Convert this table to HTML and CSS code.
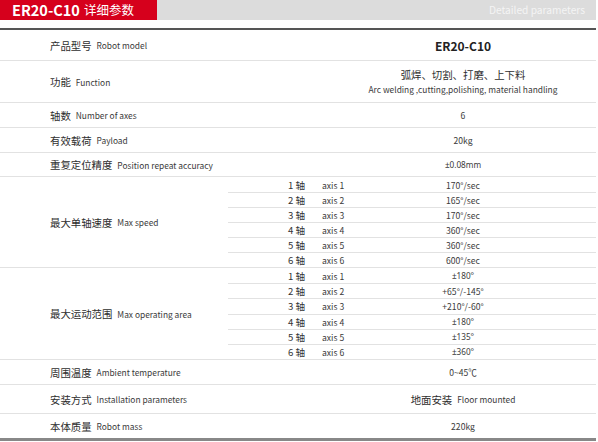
FILE: index.html
```html
<!DOCTYPE html>
<html lang="zh">
<head>
<meta charset="utf-8">
<title>ER20-C10 详细参数</title>
<link rel="stylesheet" href="styles.css">
</head>
<body>
<div class="page">
  <div class="head">
    <div class="head-title"><span class="head-en">ER20-C10</span><span class="head-cn">详细参数</span></div>
    <div class="head-sub">Detailed parameters</div>
  </div>
  <div class="spec">
    <div class="row h30">
      <div class="label"><span class="cn">产品型号</span><span class="en">Robot model</span></div>
      <div class="value model">ER20-C10</div>
    </div>
    <div class="row h41">
      <div class="label"><span class="cn">功能</span><span class="en">Function</span></div>
      <div class="value stack"><span class="cn">弧焊、切割、打磨、上下料</span><span class="en">Arc welding ,cutting,polishing, material handling</span></div>
    </div>
    <div class="row h24">
      <div class="label"><span class="cn">轴数</span><span class="en">Number of axes</span></div>
      <div class="value">6</div>
    </div>
    <div class="row h24">
      <div class="label"><span class="cn">有效载荷</span><span class="en">Payload</span></div>
      <div class="value">20kg</div>
    </div>
    <div class="row h23">
      <div class="label"><span class="cn">重复定位精度</span><span class="en">Position repeat accuracy</span></div>
      <div class="value"><span class="lat">±0.08mm</span></div>
    </div>
    <div class="row group h90">
      <div class="label"><span class="cn">最大单轴速度</span><span class="en">Max speed</span></div>
      <div class="subs">
        <div class="sub"><span class="num">1 轴</span><span class="axis">axis 1</span><span class="sval">170°/sec</span></div>
        <div class="sub"><span class="num">2 轴</span><span class="axis">axis 2</span><span class="sval">165°/sec</span></div>
        <div class="sub"><span class="num">3 轴</span><span class="axis">axis 3</span><span class="sval">170°/sec</span></div>
        <div class="sub"><span class="num">4 轴</span><span class="axis">axis 4</span><span class="sval">360°/sec</span></div>
        <div class="sub"><span class="num">5 轴</span><span class="axis">axis 5</span><span class="sval">360°/sec</span></div>
        <div class="sub"><span class="num">6 轴</span><span class="axis">axis 6</span><span class="sval">600°/sec</span></div>
      </div>
    </div>
    <div class="row group h91">
      <div class="label"><span class="cn">最大运动范围</span><span class="en">Max operating area</span></div>
      <div class="subs">
        <div class="sub"><span class="num">1 轴</span><span class="axis">axis 1</span><span class="sval lat">±180°</span></div>
        <div class="sub"><span class="num">2 轴</span><span class="axis">axis 2</span><span class="sval">+65°/-145°</span></div>
        <div class="sub"><span class="num">3 轴</span><span class="axis">axis 3</span><span class="sval">+210°/-60°</span></div>
        <div class="sub"><span class="num">4 轴</span><span class="axis">axis 4</span><span class="sval lat">±180°</span></div>
        <div class="sub"><span class="num">5 轴</span><span class="axis">axis 5</span><span class="sval lat">±135°</span></div>
        <div class="sub"><span class="num">6 轴</span><span class="axis">axis 6</span><span class="sval lat">±360°</span></div>
      </div>
    </div>
    <div class="row h24">
      <div class="label"><span class="cn">周围温度</span><span class="en">Ambient temperature</span></div>
      <div class="value">0~45℃</div>
    </div>
    <div class="row h28">
      <div class="label"><span class="cn">安装方式</span><span class="en">Installation parameters</span></div>
      <div class="value"><span class="cn">地面安装</span><span class="en">Floor mounted</span></div>
    </div>
    <div class="row h24 last">
      <div class="label"><span class="cn">本体质量</span><span class="en">Robot mass</span></div>
      <div class="value">220kg</div>
    </div>
  </div>
</div>
</body>
</html>
```
FILE: styles.css
```css
* { box-sizing: border-box; }
html, body { margin: 0; padding: 0; background: #fff; }
body {
  font-family: "Noto Sans CJK SC", "Noto Sans", sans-serif;
  color: #333;
}
.page { width: 596px; }

.head {
  display: flex;
  height: 20px;
  background: #dcdcdc;
}
.head-title {
  width: 157px;
  flex: none;
  background: #d6001c;
  color: #fff;
  padding-left: 12px;
  display: flex;
  align-items: center;
  gap: 4px;
  white-space: nowrap;
  overflow: hidden;
}
.head-en { font-weight: 700; font-size: 14.5px; line-height: 20px; }
.head-cn { font-size: 12.5px; line-height: 20px; }
.head-sub {
  flex: 1;
  text-align: right;
  padding-right: 11px;
  color: #f4f4f4;
  font-size: 10.2px;
  line-height: 20px;
}

.spec {
  margin-top: 8px;
  border-top: 2px solid #555;
  border-bottom: 3px solid #888;
}
.row {
  display: grid;
  grid-template-columns: 330px 1fr;
  border-bottom: 1px solid #e2e2e2;
}
.row.last { border-bottom: none; }
.row.group { grid-template-columns: 228px 1fr; }
.h23 { height: 24px; }
.h24 { height: 25px; }
.h28 { height: 29px; }
.h30 { height: 31px; }
.h41 { height: 42px; }
.h90 { height: 91px; }
.h91 { height: 92px; }
.row.last.h24 { height: 24px; }

.label {
  display: flex;
  align-items: center;
  padding-left: 50px;
  gap: 5px;
  white-space: nowrap;
}
.cn { font-size: 10.4px; color: #2e2e2e; }
.en { font-size: 8.4px; color: #3a3a3a; }
.lat { font-family: "Noto Sans", "Noto Sans CJK SC", sans-serif; font-size: 8.2px; }
.value {
  display: flex;
  align-items: center;
  justify-content: center;
  gap: 5px;
  font-size: 8.6px;
  color: #3a3a3a;
  white-space: nowrap;
}
.value.model { font-weight: 700; font-size: 12px; color: #222; }
.value.stack { flex-direction: column; gap: 1px; }
.value.stack .cn { line-height: 14px; }
.value.stack .en { line-height: 13px; }

.subs {
  display: grid;
  grid-template-rows: repeat(6, 1fr);
  min-height: 0;
  overflow: hidden;
}
.sub {
  min-height: 0;
  display: grid;
  grid-template-columns: 77px 77px 162px;
  align-items: center;
  border-top: 1px solid #e2e2e2;
  font-size: 8.6px;
  line-height: 12px;
  color: #3a3a3a;
}
.sub:first-child { border-top: none; }
.num { text-align: right; font-size: 9.6px; color: #333; }
.axis { padding-left: 17px; }
.sval { text-align: center; }
```
